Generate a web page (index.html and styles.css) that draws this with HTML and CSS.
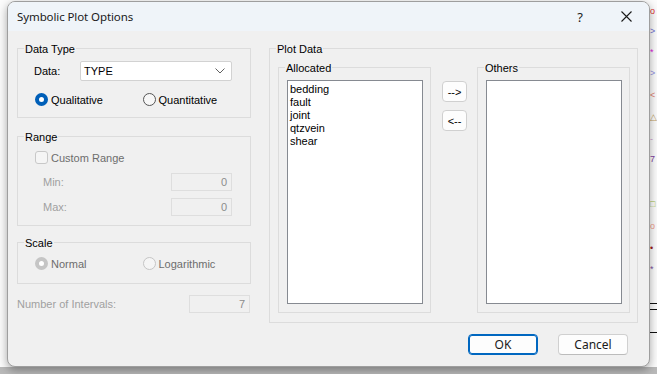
FILE: index.html
```html
<!DOCTYPE html>
<html lang="en">
<head>
    <meta charset="UTF-8">
    <title>Symbolic Plot Options</title>
    <link rel="stylesheet" href="styles.css">
</head>
<body>
    <!-- plot canvas behind the dialog -->
    <div class="canvas">
        <span class="pin" style="top:6px;color:#e03030">o</span>
        <span class="pin" style="top:26px;color:#7070d0">&gt;</span>
        <span class="pin" style="top:47px;color:#e020e0">*</span>
        <span class="pin" style="top:68px;color:#9090e0">&gt;</span>
        <span class="pin" style="top:90px;color:#e08070">&lt;</span>
        <span class="pin" style="top:112px;color:#c0a060">&#9651;</span>
        <span class="pin" style="top:134px;color:#d0a0d0">-</span>
        <span class="pin" style="top:154px;color:#8040a0">7</span>
        <span class="pin" style="top:199px;color:#a0c040">&#9633;</span>
        <span class="pin" style="top:221px;color:#f0a090">o</span>
        <span class="pin" style="top:243px;color:#a02020">&bull;</span>
        <span class="pin" style="top:264px;color:#8050a0">*</span>
        <span class="hline" style="top:303px"></span>
        <span class="hline" style="top:309px"></span>
        <span class="hline" style="top:332px"></span>
    </div>

    <div class="dialog">
        <div class="titlebar">
            <span class="title">Symbolic Plot Options</span>
            <span class="tb-btn">?</span>
            <span class="tb-btn">
                <svg width="11" height="11" viewBox="0 0 11 11"><path d="M0.5 0.5 L10.5 10.5 M10.5 0.5 L0.5 10.5" stroke="#1a1a1a" stroke-width="1.1" fill="none"/></svg>
            </span>
        </div>

        <div class="content">
            <div class="main">
                <div class="left">
                    <div class="group g-type">
                        <div class="legend">Data Type</div>
                        <div class="data-row">
                            <span class="data-lbl">Data:</span>
                            <div class="select">
                                <span>TYPE</span>
                                <svg width="10" height="6" viewBox="0 0 10 6"><path d="M0.5 0.5 L5 5 L9.5 0.5" stroke="#606060" stroke-width="1" fill="none"/></svg>
                            </div>
                        </div>
                        <div class="radio-row">
                            <span class="opt"><span class="radio on"></span>Qualitative</span>
                            <span class="opt"><span class="radio"></span>Quantitative</span>
                        </div>
                    </div>

                    <div class="group g-range">
                        <div class="legend">Range</div>
                        <div class="check-row dim">
                            <span class="check"></span>Custom Range
                        </div>
                        <div class="field-row first">
                            <span class="field-lbl">Min:</span>
                            <span class="box">0</span>
                        </div>
                        <div class="field-row">
                            <span class="field-lbl">Max:</span>
                            <span class="box">0</span>
                        </div>
                    </div>

                    <div class="group g-scale">
                        <div class="legend">Scale</div>
                        <div class="radio-row scale-row dim">
                            <span class="opt"><span class="radio off-on"></span>Normal</span>
                            <span class="opt"><span class="radio off"></span>Logarithmic</span>
                        </div>
                    </div>

                    <div class="intervals">
                        <span class="int-lbl">Number of Intervals:</span>
                        <span class="box">7</span>
                    </div>
                </div>

                <div class="group g-plot">
                    <div class="legend">Plot Data</div>
                    <div class="plot-inner">
                        <div class="group g-sub">
                            <div class="legend">Allocated</div>
                            <div class="list">
                                <div>bedding</div>
                                <div>fault</div>
                                <div>joint</div>
                                <div>qtzvein</div>
                                <div>shear</div>
                            </div>
                        </div>
                        <div class="movers">
                            <span class="mv">--&gt;</span>
                            <span class="mv">&lt;--</span>
                        </div>
                        <div class="group g-sub">
                            <div class="legend">Others</div>
                            <div class="list"></div>
                        </div>
                    </div>
                </div>
            </div>

            <div class="footer">
                <span class="btn ok">OK</span>
                <span class="btn">Cancel</span>
            </div>
        </div>
    </div>
    <div class="shade"></div>
</body>
</html>
```

FILE: styles.css
```css
html,body{
    margin:0; padding:0;
}
body{
    width:657px; height:374px; overflow:hidden; position:relative;
    background:#fcfcfc; color:#000;
    font-family:"Liberation Sans", Arial, sans-serif; font-size:11px;
}

/* canvas behind */
.canvas .pin{
    position:absolute; left:650px; font-size:9px; line-height:10px;
}
.canvas .hline{
    position:absolute; left:649px; width:8px; height:1px; background:#111;
}
.shade{
    height:8px; background:#b9b9b9;
}

/* dialog */
.dialog{
    position:relative; margin:1px 0 0 7px; width:643px; height:366px; box-sizing:border-box;
    border:1px solid #9e9e9e; border-radius:8px; background:#f0f0f0; overflow:hidden;
    box-shadow:0 3px 10px rgba(0,0,0,0.35);
}
.titlebar{
    height:29px; background:#eff4f9; display:flex; align-items:center; padding-left:9px;
    font-family:"Noto Sans", "Open Sans", sans-serif; font-size:11.5px; color:#1a1a1a;
}
.titlebar .title{ flex:1; letter-spacing:-0.1px; }
.tb-btn{
    width:46px; height:29px; display:flex; align-items:center; justify-content:center; font-size:13px;
}

.content{ padding:17px 0 0 9px; }
.main{ display:flex; }
.left{ width:234px; }

.group{
    border:1px solid #dcdcdc; box-sizing:border-box;
}
.legend{
    width:fit-content; height:14px; line-height:14px; margin:-7px 0 0 6px; padding:0 1px;
    background:#f0f0f0;
}
.dim{ color:#6d6d6d; }

.g-type{ height:70px; }
.data-row{
    display:flex; align-items:center; margin-top:5px; padding-left:16px;
}
.data-lbl{ width:46px; }
.select{
    width:152px; height:20px; box-sizing:border-box; border:1px solid #d2d2d2; border-radius:2px;
    background:#fff; display:flex; align-items:center; justify-content:space-between;
    padding:0 6px 0 3px;
}
.radio-row{
    display:flex; height:13px; margin-top:12px; padding-left:17px;
}
.opt{
    display:flex; align-items:center; gap:3px; width:108px;
}
.radio{
    width:13px; height:13px; box-sizing:border-box; border-radius:50%;
    border:1px solid #555; background:#f7f7f7; flex:none;
}
.radio.on{
    border:4px solid #005fb8; background:#fff;
}
.radio.off-on{
    border:4px solid #c5c5c5; background:#fff;
}
.radio.off{
    border-color:#c5c5c5; background:#f5f5f5;
}

.g-range{ height:90px; margin-top:18px; }
.check-row{
    display:flex; align-items:center; gap:3px; margin-top:7px; padding-left:17px; height:13px;
}
.check{
    width:13px; height:13px; box-sizing:border-box; border:1px solid #c8c8c8; border-radius:3px;
    background:#f5f5f5;
}
.field-row{
    display:flex; align-items:center; margin-top:7px; padding-left:25px; color:#a0a0a0;
}
.field-row.first{ margin-top:9px; }
.field-lbl{ width:128px; }
.box{
    width:61px; height:18px; box-sizing:border-box; border:1px solid #dedede;
    display:flex; align-items:center; justify-content:flex-end; padding-right:4px;
    color:#8c8c8c; background:#f0f0f0;
}

.g-scale{ height:42px; margin-top:16px; }
.scale-row{ margin-top:7px; }

.intervals{
    display:flex; align-items:center; margin-top:11px; color:#a0a0a0;
}
.int-lbl{ width:172px; }

/* plot data */
.g-plot{
    width:369px; height:275px; margin-left:18px;
}
.plot-inner{
    display:flex; margin-top:11px; padding-left:8px;
}
.g-sub{ width:153px; height:246px; }
.list{
    width:136px; height:224px; box-sizing:border-box; margin:5px 0 0 8px;
    border:1px solid #868a91; background:#fff; padding:2px 2px; line-height:13px;
}
.movers{
    display:flex; flex-direction:column; gap:8px; margin:14px 10px 0 11px;
}
.mv{
    width:25px; height:21px; box-sizing:border-box; border:1px solid #d0d0d0; border-radius:4px;
    background:#fdfdfd; display:flex; align-items:center; justify-content:center; font-size:11px;
}

.footer{
    display:flex; justify-content:flex-end; gap:20px; margin-top:11px; padding-right:21px;
}
.btn{
    width:70px; height:21px; box-sizing:border-box; border:1px solid #d0d0d0; border-bottom-color:#bcbcbc;
    border-radius:4px; background:#fdfdfd; display:flex; align-items:center; justify-content:center;
    font-family:"Noto Sans", "Open Sans", sans-serif; font-size:12px; color:#1a1a1a;
}
.btn.ok{
    border-color:#0067c0; box-shadow:inset 0 0 0 1px #0067c0;
}
```
